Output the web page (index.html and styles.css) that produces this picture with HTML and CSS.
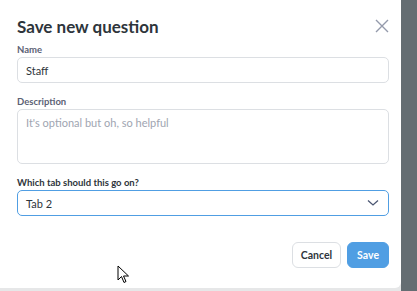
FILE: index.html
```html
<!DOCTYPE html>
<html lang="en">
<head>
  <meta charset="UTF-8" />
  <title>Save new question</title>
  <link rel="stylesheet" href="styles.css">
</head>
<body>
  <div class="modal">
    <div class="modal-header">
      <h2>Save new question</h2>
      <svg class="close" width="14" height="14" viewBox="0 0 14 14">
        <path d="M1 1 L13 13 M13 1 L1 13" stroke="#949aab" stroke-width="1.4" fill="none"/>
      </svg>
    </div>

    <label class="field-label">Name</label>
    <div class="input">Staff</div>

    <label class="field-label">Description</label>
    <div class="input textarea placeholder">It's optional but oh, so helpful</div>

    <label class="field-label dark">Which tab should this go on?</label>
    <div class="input select">
      <span>Tab 2</span>
      <svg width="12" height="8" viewBox="0 0 12 8">
        <path d="M1 1.5 L6 6 L11 1.5" stroke="#4c5773" stroke-width="1.3" fill="none"/>
      </svg>
    </div>

    <div class="actions">
      <button class="btn">Cancel</button>
      <button class="btn primary">Save</button>
    </div>

    <svg class="cursor" width="14" height="20" viewBox="0 0 14 20">
      <path d="M1 1 L1 15 L4.5 11.5 L7 17.5 L9 16.5 L6.5 11 L11.5 11 Z" fill="#fff" stroke="#000" stroke-width="1"/>
    </svg>
  </div>
  <div class="overlay"></div>
</body>
</html>
```

FILE: styles.css
```css
body {
  margin: 0;
  display: flex;
  height: 291px;
  background-color: #e6e7e8;
  font-family: 'Lato', sans-serif;
  overflow: hidden;
}

.modal {
  position: relative;
  width: 401px;
  height: 288px;
  box-sizing: border-box;
  padding: 0 12px 0 17px;
  background: #ffffff;
  border-bottom-right-radius: 6px;
  display: flex;
  flex-direction: column;
}

.overlay {
  flex: 1;
  background: #646d72;
}

.modal-header {
  display: flex;
  justify-content: space-between;
  align-items: center;
  height: 36px;
  padding-top: 8px;
}

.modal-header h2 {
  margin: 0;
  font-size: 17px;
  font-weight: 700;
  color: #2e353b;
}

.field-label {
  font-size: 9.5px;
  line-height: 12px;
  font-weight: 700;
  color: #5c6275;
  margin-bottom: 1px;
}

.field-label.dark {
  color: #2e353b;
}

.input {
  box-sizing: border-box;
  height: 26px;
  border: 1px solid #dcdfe3;
  border-radius: 5px;
  padding: 0 8px;
  display: flex;
  align-items: center;
  font-size: 11px;
  color: #2e353b;
  margin-bottom: 13px;
}

.textarea {
  height: 55px;
  align-items: flex-start;
  padding-top: 6px;
}

.placeholder {
  color: #a0a5b1;
}

.select {
  justify-content: space-between;
  border-color: #509ee3;
  padding-right: 9px;
}

.actions {
  display: flex;
  justify-content: flex-end;
  gap: 6px;
  margin-top: 13px;
}

.btn {
  height: 26px;
  box-sizing: border-box;
  border: 1px solid #dcdfe3;
  border-radius: 6px;
  background: #fff;
  font-family: 'Lato', sans-serif;
  font-weight: 700;
  font-size: 10.5px;
  color: #2e353b;
  padding: 0 8px;
}

.btn.primary {
  background: #509ee3;
  border-color: #509ee3;
  color: #fff;
  padding: 0 9px;
}

.cursor {
  position: absolute;
  left: 117px;
  top: 265px;
}
```
